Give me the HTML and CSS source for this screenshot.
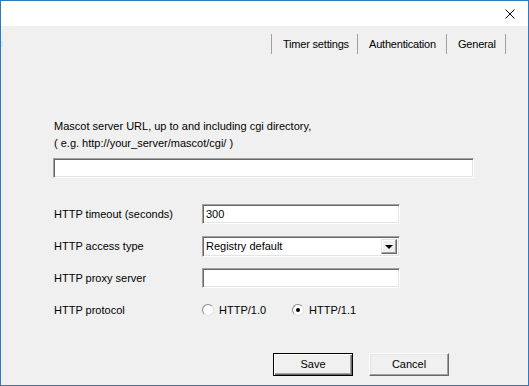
FILE: index.html
```html
<!DOCTYPE html>
<html lang="en">
<head>
  <meta charset="UTF-8">
  <title>Mascot settings</title>
  <link rel="stylesheet" href="styles.css">
</head>
<body>
  <div class="window">
    <div class="titlebar">
      <span class="close">
        <svg width="10" height="10" viewBox="0 0 10 10"><path d="M0.5 0.5 L9.5 9.5 M9.5 0.5 L0.5 9.5" stroke="#000" stroke-width="1" fill="none"/></svg>
      </span>
    </div>

    <div class="tabbar">
      <span class="edge-mark"></span>
      <div class="tabs">
        <div class="tab">Timer settings</div>
        <div class="tab">Authentication</div>
        <div class="tab last">General</div>
      </div>
    </div>

    <div class="panel">
      <p class="url-label">Mascot server URL, up to and including cgi directory,<br>( e.g. http://your_server/mascot/cgi/ )</p>
      <div class="field url-field"></div>

      <div class="settings">
        <div class="label">HTTP timeout (seconds)</div>
        <div class="field">300</div>

        <div class="label">HTTP access type</div>
        <div class="field select">
          <span>Registry default</span>
          <span class="drop-btn"><span class="arrow"></span></span>
        </div>

        <div class="label">HTTP proxy server</div>
        <div class="field"></div>

        <div class="label">HTTP protocol</div>
        <div class="radios">
          <span class="radio-item"><span class="radio"></span>HTTP/1.0</span>
          <span class="radio-item"><span class="radio checked"></span>HTTP/1.1</span>
        </div>
      </div>
    </div>

    <div class="buttons">
      <div class="btn default">Save</div>
      <div class="btn">Cancel</div>
    </div>
  </div>
</body>
</html>
```

FILE: styles.css
```css
body {
  margin: 0;
  font-family: 'Liberation Sans', Arial, sans-serif;
  font-size: 11px;
  color: #000;
}

/* Window frame */
.window {
  width: 529px;
  height: 386px;
  box-sizing: border-box;
  border: 1px solid #2b7bc2;
  background: #f0f0f0;
}

.titlebar {
  height: 25px;
  background: #fff;
  display: flex;
  justify-content: flex-end;
  align-items: center;
}

.close {
  width: 36px;
  height: 10px;
  display: flex;
  justify-content: center;
}

/* Tab strip */
.tabbar {
  margin-top: 8px;
  height: 20px;
  display: flex;
  justify-content: space-between;
  align-items: center;
  padding-right: 22px;
}

.edge-mark {
  width: 2px;
  height: 6px;
  background: #d4ecfa;
}

.tabs {
  display: flex;
  height: 20px;
}

.tab {
  box-sizing: border-box;
  height: 20px;
  line-height: 20px;
  padding-left: 11px;
  border-left: 1px solid #a0a0a0;
  letter-spacing: -0.2px;
  white-space: nowrap;
}

.tab:nth-child(1) { width: 86px; }
.tab:nth-child(2) { width: 89px; }
.tab.last {
  width: 60px;
  border-right: 1px solid #a0a0a0;
}

/* Form */
.panel {
  padding-left: 52px;
}

.url-label {
  margin: 64px 0 0;
  padding-left: 1px;
  line-height: 17px;
}

.field {
  box-sizing: border-box;
  height: 20px;
  background: #fff;
  border: 1px solid;
  border-color: #a0a0a0 #fff #fff #a0a0a0;
  box-shadow: inset 1px 1px #696969, inset -1px -1px #e3e3e3;
  padding-left: 3px;
  line-height: 18px;
}

.url-field {
  margin-top: 6px;
  width: 421px;
}

.settings {
  margin-top: 26px;
  display: grid;
  grid-template-columns: 149px 198px;
  grid-auto-rows: 20px;
  row-gap: 12px;
  align-items: center;
}

.settings .label {
  padding-left: 1px;
}

.select {
  height: 21px;
  display: flex;
  justify-content: space-between;
  align-items: center;
  padding-right: 2px;
}

.drop-btn {
  box-sizing: border-box;
  width: 16px;
  height: 15px;
  background: #f0f0f0;
  border: 1px solid;
  border-color: #e3e3e3 #696969 #696969 #e3e3e3;
  box-shadow: inset -1px -1px #a0a0a0, inset 1px 1px #fff;
  display: flex;
  justify-content: center;
  align-items: center;
}

.arrow {
  width: 0;
  height: 0;
  border-left: 4px solid transparent;
  border-right: 4px solid transparent;
  border-top: 4px solid #000;
  margin-top: 1px;
}

.radios {
  display: flex;
  align-items: center;
  gap: 26px;
}

.radio-item {
  display: flex;
  align-items: center;
  gap: 5px;
}

.radio {
  box-sizing: border-box;
  width: 12px;
  height: 12px;
  border-radius: 50%;
  background: #fff;
  border: 1px solid;
  border-color: #8a8a8a #e3e3e3 #e3e3e3 #8a8a8a;
  display: flex;
  justify-content: center;
  align-items: center;
}

.radio.checked::after {
  content: '';
  width: 4px;
  height: 4px;
  border-radius: 50%;
  background: #000;
}

/* Buttons */
.buttons {
  margin-top: 33px;
  display: flex;
  justify-content: flex-end;
  gap: 16px;
  padding-right: 79px;
}

.btn {
  box-sizing: border-box;
  width: 80px;
  height: 23px;
  line-height: 21px;
  text-align: center;
  background: #f0f0f0;
  border: 1px solid;
  border-color: #fff #696969 #696969 #fff;
  box-shadow: inset -1px -1px #a0a0a0, inset 1px 1px #e3e3e3;
}

.btn.default {
  border: 1px solid #000;
  box-shadow: inset 1px 1px #fff, inset -1px -1px #696969, inset -2px -2px #a0a0a0;
}
```
